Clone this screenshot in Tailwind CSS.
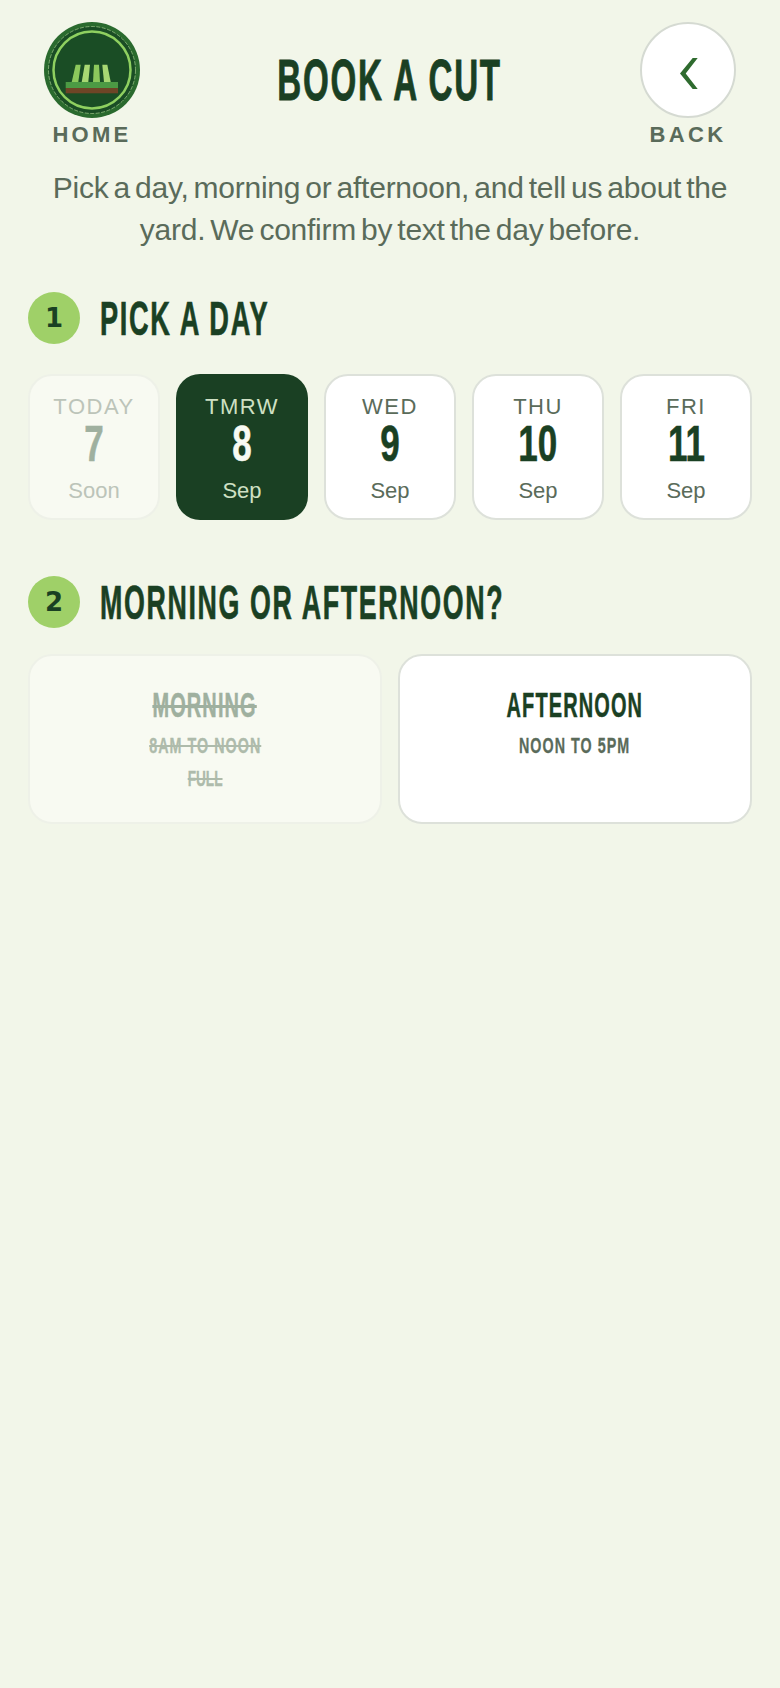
<!DOCTYPE html>
<html lang="en">
<head>
    <meta charset="UTF-8">
    <meta name="viewport" content="width=device-width, initial-scale=1.0">
    <title>Book a Cut</title>
    <script src="https://cdn.jsdelivr.net/npm/@tailwindcss/browser@4"></script>
</head>
<body class="bg-[#f2f6e9] text-[#5a6b5a] font-['Liberation_Sans',Arial,sans-serif] w-[780px] min-h-[1688px] overflow-hidden">
<div class="px-7 pt-[22px]">
    <!-- header -->
    <div class="flex justify-between items-start px-4">
        <div class="flex flex-col items-center w-[96px]">
            <svg width="96" height="96" viewBox="0 0 96 96">
                <circle cx="48" cy="48" r="48" fill="#2a6a2e"/>
                <circle cx="48" cy="48" r="43.5" fill="#1a4d25"/>
                <circle cx="48" cy="48" r="43.5" fill="none" stroke="#b5d99a" stroke-width="0.6" stroke-dasharray="4 1.5"/>
                <circle cx="48" cy="48" r="38.5" fill="none" stroke="#8fd060" stroke-width="2.5"/>
                <polygon points="31.7,42.7 36.7,42.7 34.3,60 27.7,60" fill="#8cc85c"/>
                <polygon points="40.7,42.7 46,42.7 44.3,60 37.7,60" fill="#a8d873"/>
                <polygon points="50,42.7 55,42.7 56,60 49,60" fill="#8cc85c"/>
                <polygon points="58.3,42.7 63.3,42.7 66.7,60 60,60" fill="#a8d873"/>
                <rect x="21.7" y="60" width="52.3" height="6" fill="#4c9a44"/>
                <rect x="21.7" y="66" width="52.3" height="5.3" fill="#6e4526"/>
            </svg>
            <div class="mt-[3px] whitespace-nowrap text-[22px] leading-[28px] font-bold tracking-[3.3px]">HOME</div>
        </div>
        <div class="mt-[26px] whitespace-nowrap font-bold text-[#1a4023] text-[58px] leading-[64px] tracking-[3px] scale-x-[0.571] [-webkit-text-stroke:0.9px]">BOOK A CUT</div>
        <div class="flex flex-col items-center w-[96px]">
            <div class="w-[96px] h-[96px] rounded-full bg-white border-2 border-[#d5dad2] flex items-center justify-center">
                <svg class="mt-[6px] ml-[2px]" width="18" height="31" viewBox="0 0 18 31"><polygon points="12.7,0 17.7,0 5.7,15.5 17.7,31 12.7,31 0,15.5" fill="#2f6b2f"/></svg>
            </div>
            <div class="mt-[3px] whitespace-nowrap text-[22px] leading-[28px] font-bold tracking-[3.3px]">BACK</div>
        </div>
    </div>
    <p class="mt-[18px] text-center text-[30px] leading-[42px] tracking-[-0.25px] [word-spacing:-3px]">Pick a day, morning or afternoon, and tell us about the<br>yard. We confirm by text the day before.</p>

    <!-- step 1 -->
    <div class="mt-[41px] flex items-center gap-5">
        <div class="shrink-0 w-[52px] h-[52px] rounded-full bg-[#9fd068] text-[#1a4023] font-['DejaVu_Sans',sans-serif] font-bold text-[26px] flex items-center justify-center">1</div>
        <div class="whitespace-nowrap font-bold text-[#1a4023] text-[49px] leading-[52px] tracking-[3px] origin-left scale-x-[0.555] [-webkit-text-stroke:0.7px]">PICK A DAY</div>
    </div>
    <div class="mt-[30px] grid grid-cols-5 gap-4">
        <div class="h-[146px] rounded-[24px] bg-[#f8faf2] border-2 border-[#eef1e8] flex flex-col items-center pt-[18px]">
            <div class="text-[22px] leading-[26px] tracking-[1.5px] text-[#bcc4b9]">TODAY</div>
            <div class="font-bold text-[50px] leading-[48px] text-[#9fb09f] scale-x-[0.7] [-webkit-text-stroke:0.6px]">7</div>
            <div class="mt-[10px] text-[22px] leading-[26px] text-[#bcc4b9]">Soon</div>
        </div>
        <div class="h-[146px] rounded-[24px] bg-[#1a4023] flex flex-col items-center pt-[20px]">
            <div class="text-[22px] leading-[26px] tracking-[1.5px] text-[#cfe0c4]">TMRW</div>
            <div class="font-bold text-[50px] leading-[48px] text-[#f8faf2] scale-x-[0.7] [-webkit-text-stroke:0.6px]">8</div>
            <div class="mt-[10px] text-[22px] leading-[26px] text-[#cfe0c4]">Sep</div>
        </div>
        <div class="h-[146px] rounded-[24px] bg-white border-2 border-[#dde1da] flex flex-col items-center pt-[18px]">
            <div class="text-[22px] leading-[26px] tracking-[1.5px]">WED</div>
            <div class="font-bold text-[50px] leading-[48px] text-[#1a4023] scale-x-[0.7] [-webkit-text-stroke:0.6px]">9</div>
            <div class="mt-[10px] text-[22px] leading-[26px]">Sep</div>
        </div>
        <div class="h-[146px] rounded-[24px] bg-white border-2 border-[#dde1da] flex flex-col items-center pt-[18px]">
            <div class="text-[22px] leading-[26px] tracking-[1.5px]">THU</div>
            <div class="font-bold text-[50px] leading-[48px] text-[#1a4023] scale-x-[0.7] [-webkit-text-stroke:0.6px]">10</div>
            <div class="mt-[10px] text-[22px] leading-[26px]">Sep</div>
        </div>
        <div class="h-[146px] rounded-[24px] bg-white border-2 border-[#dde1da] flex flex-col items-center pt-[18px]">
            <div class="text-[22px] leading-[26px] tracking-[1.5px]">FRI</div>
            <div class="font-bold text-[50px] leading-[48px] text-[#1a4023] scale-x-[0.7] [-webkit-text-stroke:0.6px]">11</div>
            <div class="mt-[10px] text-[22px] leading-[26px]">Sep</div>
        </div>
    </div>

    <!-- step 2 -->
    <div class="mt-[56px] flex items-center gap-5">
        <div class="shrink-0 w-[52px] h-[52px] rounded-full bg-[#9fd068] text-[#1a4023] font-['DejaVu_Sans',sans-serif] font-bold text-[26px] flex items-center justify-center">2</div>
        <div class="whitespace-nowrap font-bold text-[#1a4023] text-[49px] leading-[52px] tracking-[3px] origin-left scale-x-[0.547] [-webkit-text-stroke:0.7px]">MORNING OR AFTERNOON?</div>
    </div>
    <div class="mt-[26px] grid grid-cols-2 gap-4">
        <div class="h-[170px] rounded-[24px] bg-[#f8faf2] border-2 border-[#eef1e8] flex flex-col items-center pt-[31px] font-bold">
            <div class="whitespace-nowrap text-[35px] leading-[36px] tracking-[2px] line-through text-[#9fb09f] scale-x-[0.57] [-webkit-text-stroke:0.5px]">MORNING</div>
            <div class="mt-[9px] whitespace-nowrap text-[22px] leading-[28px] tracking-[1.6px] line-through text-[#aebbab] scale-x-[0.65] [-webkit-text-stroke:0.3px]">8AM TO NOON</div>
            <div class="mt-[5px] whitespace-nowrap text-[22px] leading-[28px] line-through text-[#aebbab] scale-x-[0.62] [-webkit-text-stroke:0.3px]">FULL</div>
        </div>
        <div class="h-[170px] rounded-[24px] bg-white border-2 border-[#dde1da] flex flex-col items-center pt-[31px] font-bold">
            <div class="whitespace-nowrap text-[35px] leading-[36px] tracking-[2px] text-[#1a4023] scale-x-[0.57] [-webkit-text-stroke:0.5px]">AFTERNOON</div>
            <div class="mt-[9px] whitespace-nowrap text-[22px] leading-[28px] tracking-[1.6px] scale-x-[0.65] [-webkit-text-stroke:0.3px]">NOON TO 5PM</div>
        </div>
    </div>
</div>
</body>
</html>
